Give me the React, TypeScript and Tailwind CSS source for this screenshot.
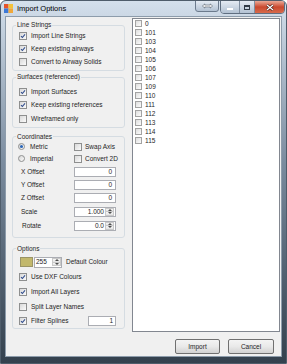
import React from 'react';

const layers = ['0', '101', '103', '104', '105', '106', '107', '109', '110', '111', '112', '113', '114', '115'];

const Check = ({ checked = false }: { checked?: boolean }) => (
  <span className="relative shrink-0 w-[8px] h-[8px] border border-[#8e8f8f] bg-linear-to-br from-[#d9d9d9] to-[#fbfbfb]">
    {checked && (
      <svg viewBox="0 0 6 6" className="absolute inset-0 w-full h-full">
        <path d="M1 3.1 L2.4 4.5 L5 1.3" stroke="#34508f" strokeWidth="1.1" fill="none" />
      </svg>
    )}
  </span>
);

const Radio = ({ checked = false }: { checked?: boolean }) => (
  <span className="relative shrink-0 w-[7px] h-[7px] rounded-full border border-[#8e8f8f] bg-linear-to-br from-[#d6d6d6] to-[#fbfbfb] flex items-center justify-center">
    {checked && <span className="w-[3px] h-[3px] rounded-full bg-[#2a66b8]" />}
  </span>
);

const Spinner = () => (
  <span className="flex flex-col w-[9px] h-[8px] shrink-0">
    <span className="flex-1 flex items-center justify-center border border-[#c9c9c9] bg-linear-to-b from-[#f7f7f7] to-[#e4e4e4]">
      <svg viewBox="0 0 4 2" className="w-[4px] h-[2px]"><path d="M0 2 L2 0 L4 2 Z" fill="#4d4d4d" /></svg>
    </span>
    <span className="flex-1 flex items-center justify-center border border-t-0 border-[#c9c9c9] bg-linear-to-b from-[#f7f7f7] to-[#e4e4e4]">
      <svg viewBox="0 0 4 2" className="w-[4px] h-[2px]"><path d="M0 0 L2 2 L4 0 Z" fill="#4d4d4d" /></svg>
    </span>
  </span>
);

const TextBox = ({ value, spin = false }: { value: string; spin?: boolean }) => (
  <span className="flex items-center justify-end w-[42px] h-[10px] bg-white border border-[#abadb3] pr-[1px] gap-[1px] mr-[8px] ml-auto">
    <span className="leading-[8px]">{value}</span>
    {spin ? <Spinner /> : <span className="w-[1px]" />}
  </span>
);

const Group = ({ title, className, children }: { title: string; className: string; children: React.ReactNode }) => (
  <fieldset className={`border border-[#d5dce2] rounded-[3px] ${className}`}>
    <legend className="ml-[3px] px-[1px] leading-[8px]">{title}</legend>
    {children}
  </fieldset>
);

export default function App() {
  return (
    <div className="w-[287px] h-[364px] flex flex-col bg-linear-to-b from-[#d4e0ec] via-[#7a8b9e] via-45% to-[#34414e] border border-[#4f5d6b] rounded-t-[6px] overflow-hidden font-['Liberation_Sans',Arial,sans-serif] text-[6.5px] text-[#1e1e1e]">
      {/* Title bar */}
      <div className="h-[15px] flex items-start shrink-0">
        <svg viewBox="0 0 9 9" className="w-[9px] h-[9px] ml-[3px] mt-[3px]">
          <rect x="0" y="0" width="4.5" height="4.5" fill="#e5542b" />
          <rect x="4.5" y="0" width="4.5" height="4.5" fill="#f3c23a" />
          <rect x="0" y="4.5" width="4.5" height="4.5" fill="#3c78d6" />
          <rect x="4.5" y="4.5" width="4.5" height="4.5" fill="#f0a83a" />
        </svg>
        <span className="ml-[4px] mt-[3px] text-[7.5px] leading-[10px] text-black">Import Options</span>
        <div className="ml-auto flex items-start mr-[1px] -mt-[1px]">
          <div className="w-[24px] h-[12px] flex items-center justify-center border border-[#6c7b8d] rounded-b-[3px] bg-linear-to-b from-[#e4ebf3] to-[#b3c2d3]">
            <svg viewBox="0 0 12 6" className="w-[11px] h-[6px]">
              <path d="M0.5 3 L3 0.8 L3 2 L9 2 L9 0.8 L11.5 3 L9 5.2 L9 4 L3 4 L3 5.2 Z" fill="#fff" stroke="#3f4a57" strokeWidth="0.6" />
            </svg>
          </div>
          <div className="ml-[1px] flex h-[14px] border border-[#5f6e80] rounded-b-[4px] overflow-hidden">
            <div className="w-[19px] flex items-center justify-center bg-linear-to-b from-[#e4ebf3] to-[#b3c2d3] border-r border-[#7f8ea0]">
              <span className="w-[6px] h-[2px] mt-[3px] bg-[#2f3a46] border-[0.5px] border-white" />
            </div>
            <div className="w-[15px] flex items-center justify-center bg-linear-to-b from-[#e4ebf3] to-[#b3c2d3] border-r border-[#7f8ea0]">
              <span className="w-[6px] h-[5px] border border-[#2f3a46] border-t-2" />
            </div>
            <div className="w-[29px] flex items-center justify-center bg-linear-to-b from-[#e9a896] via-[#c9482e] to-[#d76a4b]">
              <svg viewBox="0 0 8 7" className="w-[8px] h-[7px]">
                <path d="M1 1 L7 6 M7 1 L1 6" stroke="#3a1a14" strokeWidth="2.4" />
                <path d="M1 1 L7 6 M7 1 L1 6" stroke="#fff" strokeWidth="1.3" />
              </svg>
            </div>
          </div>
        </div>
      </div>

      {/* Client area */}
      <div className="mx-[4px] mb-[6px] flex-1 flex flex-col bg-[#f0f0f0] border border-[#8d9cab]">
        <div className="flex items-start">
          {/* Left column */}
          <div className="w-[113px] ml-[6px] mt-[4px] flex flex-col">
            <Group title="Line Strings" className="pb-[2px]">
              <div className="h-[13px] flex items-center pl-[6px] gap-[4px]"><Check checked /><span>Import Line Strings</span></div>
              <div className="h-[13px] flex items-center pl-[6px] gap-[4px]"><Check checked /><span>Keep existing airways</span></div>
              <div className="h-[13px] flex items-center pl-[6px] gap-[4px]"><Check /><span>Convert to Airway Solids</span></div>
            </Group>

            <Group title="Surfaces (referenced)" className="mt-[2px] pt-[4px] pb-[1px]">
              <div className="h-[13.5px] flex items-center pl-[6px] gap-[4px]"><Check checked /><span>Import Surfaces</span></div>
              <div className="h-[13.5px] flex items-center pl-[6px] gap-[4px]"><Check checked /><span>Keep existing references</span></div>
              <div className="h-[13.5px] flex items-center pl-[6px] gap-[4px]"><Check /><span>Wireframed only</span></div>
            </Group>

            <Group title="Coordinates" className="mt-[5px] pb-[4px]">
              <div className="h-[12px] flex items-center">
                <div className="w-[61px] flex items-center pl-[5px] gap-[5px]"><Radio checked /><span>Metric</span></div>
                <div className="flex items-center gap-[3px]"><Check /><span>Swap Axis</span></div>
              </div>
              <div className="h-[12px] flex items-center">
                <div className="w-[61px] flex items-center pl-[5px] gap-[5px]"><Radio /><span>Imperial</span></div>
                <div className="flex items-center gap-[3px]"><Check /><span>Convert 2D</span></div>
              </div>
              <div className="h-[13px] mt-[1px] flex items-center pl-[8px]"><span>X Offset</span><TextBox value="0" /></div>
              <div className="h-[13px] flex items-center pl-[8px]"><span>Y Offset</span><TextBox value="0" /></div>
              <div className="h-[13px] flex items-center pl-[8px]"><span>Z Offset</span><TextBox value="0" /></div>
              <div className="h-[14px] flex items-center pl-[8px]"><span>Scale</span><TextBox value="1.000" spin /></div>
              <div className="h-[14px] flex items-center pl-[9px]"><span>Rotate</span><TextBox value="0.0" spin /></div>
            </Group>

            <Group title="Options" className="mt-[7px] pt-[2px]">
              <div className="h-[15px] flex items-center pl-[7px]">
                <span className="w-[13px] h-[10px] bg-[#c2b86c] border border-[#9a9466]" />
                <span className="ml-[1px] w-[28px] h-[11px] flex items-center bg-white border border-[#abadb3] pl-[1px]">
                  <span className="flex-1 leading-[8px]">255</span>
                  <Spinner />
                </span>
                <span className="ml-[4px]">Default Colour</span>
              </div>
              <div className="h-[15px] flex items-center pl-[6px] gap-[4px]"><Check checked /><span>Use DXF Colours</span></div>
              <div className="h-[15px] flex items-center pl-[6px] gap-[4px]"><Check checked /><span>Import All Layers</span></div>
              <div className="h-[15px] flex items-center pl-[6px] gap-[4px]"><Check /><span>Split Layer Names</span></div>
              <div className="h-[13px] flex items-center pl-[6px] gap-[4px]">
                <Check checked />
                <span>Filter Splines</span>
                <span className="ml-auto mr-[8px] w-[28px] h-[10px] bg-white border border-[#abadb3] flex items-center justify-end pr-[2px] leading-[8px]">1</span>
              </div>
            </Group>
          </div>

          {/* Layer list */}
          <div className="ml-[7px] mt-[1px] w-[148px] h-[314px] bg-white border border-[#828790] flex flex-col">
            {layers.map((name) => (
              <div key={name} className="h-[9px] flex items-center pl-[2px] gap-[3px]">
                <span className="shrink-0 w-[7px] h-[7px] border border-[#a3a3a3] bg-linear-to-br from-[#dedede] to-[#fcfcfc]" />
                <span className="leading-[8px] text-[#1e1e1e]">{name}</span>
              </div>
            ))}
          </div>
        </div>

        {/* Buttons */}
        <div className="mt-[7px] flex justify-end gap-[8px] pr-[7px]">
          <button className="w-[45px] h-[15px] rounded-[2px] border border-[#707070] bg-linear-to-b from-[#f4f4f4] via-[#e9e9e9] to-[#d2d2d2] text-[6.5px]">Import</button>
          <button className="w-[46px] h-[15px] rounded-[2px] border border-[#707070] bg-linear-to-b from-[#f4f4f4] via-[#e9e9e9] to-[#d2d2d2] text-[6.5px]">Cancel</button>
        </div>
      </div>
    </div>
  );
}
